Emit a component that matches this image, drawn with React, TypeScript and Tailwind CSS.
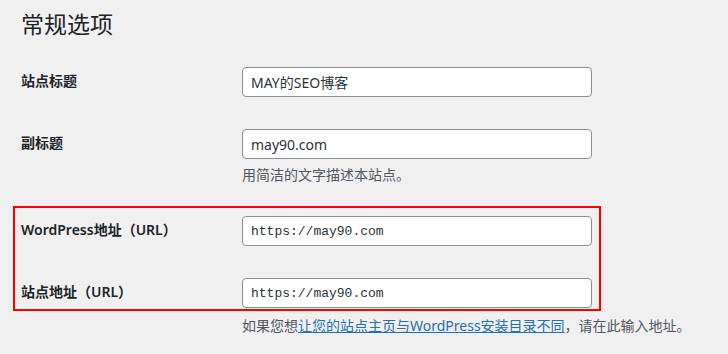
const sans = "font-['Noto_Sans','Noto_Sans_CJK_SC',sans-serif]";

function Field({ value, mono }: { value: string; mono?: boolean }) {
  return (
    <input
      readOnly
      value={value}
      className={
        "box-border h-[30px] w-[350px] rounded-[4px] border border-[#8c8f94] bg-white px-[8px] text-[#2c3338] outline-none " +
        (mono ? "font-['Liberation_Mono',monospace] text-[13px]" : "text-[14px]")
      }
    />
  );
}

function Row({ label, children, className = "" }: { label: string; children: React.ReactNode; className?: string }) {
  return (
    <div className={"flex items-start " + className}>
      <div className="w-[221px] text-[14px] font-semibold leading-[28px] text-[#1d2327]">{label}</div>
      {children}
    </div>
  );
}

export default function App() {
  return (
    <div className={"min-h-screen bg-[#f0f0f1] pl-[21px] pt-[10px] " + sans}>
      <h1 className="text-[23px] font-normal leading-[29px] text-[#1d2327]">常规选项</h1>

      <Row label="站点标题" className="mt-[28px]">
        <Field value="MAY的SEO博客" />
      </Row>
      <Row label="副标题" className="mt-[32px]">
        <Field value="may90.com" />
      </Row>
      <p className="ml-[221px] mt-[6px] text-[14px] leading-[20px] text-[#50575e]">用简洁的文字描述本站点。</p>

      <div className="-ml-[8px] mt-[21px] w-[588px] border-2 border-[#ff0000] pb-[1px] pl-[6px] pt-[8px]">
        <Row label="WordPress地址（URL）">
          <Field value="https://may90.com" mono />
        </Row>
        <Row label="站点地址（URL）" className="mt-[32px]">
          <Field value="https://may90.com" mono />
        </Row>
      </div>
      <p className="ml-[221px] mt-[5px] text-[14px] leading-[20px] text-[#50575e]">
        如果您想
        <a href="#" className="text-[#2271b1] underline">让您的站点主页与WordPress安装目录不同</a>
        ，请在此输入地址。
      </p>
    </div>
  );
}
